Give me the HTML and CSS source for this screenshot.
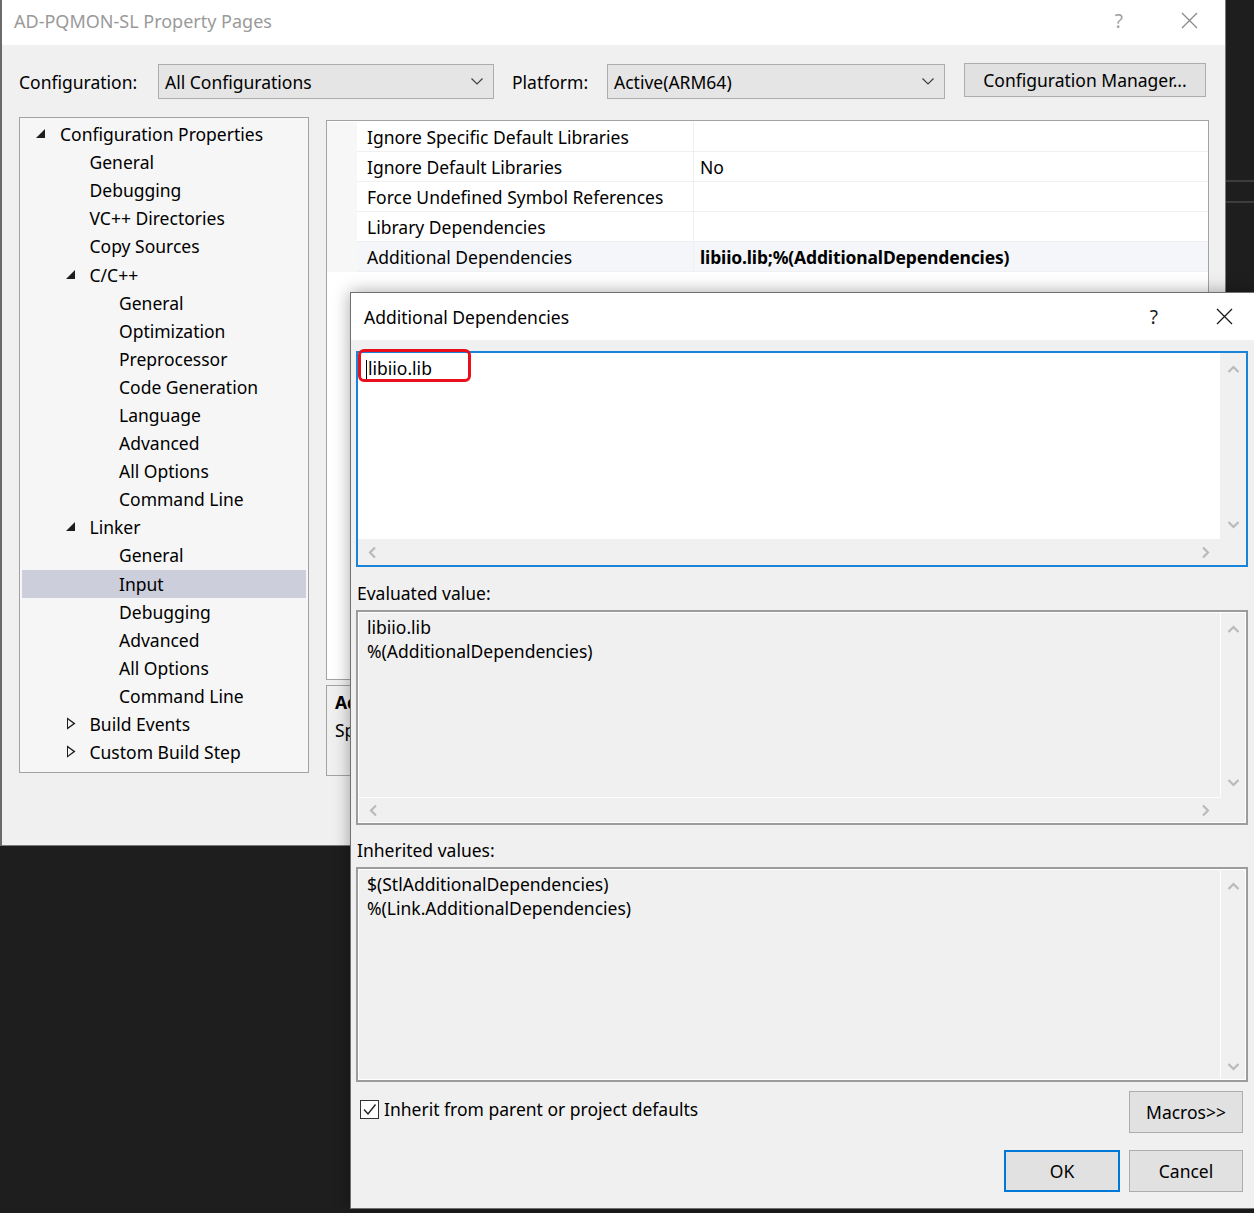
FILE: index.html
```html
<!DOCTYPE html>
<html lang="en">
<head>
<meta charset="utf-8">
<title>AD-PQMON-SL Property Pages</title>
<link rel="stylesheet" href="styles.css">
</head>
<body>
<div class="desk-line dl1"></div>
<div class="desk-line dl2"></div>

<div class="window main">
  <div class="main-title">
    <span class="title">AD-PQMON-SL Property Pages</span>
    <span class="help">?</span>
    <svg class="close" width="17" height="17" viewBox="0 0 17 17"><path d="M1 1L16 16M16 1L1 16" stroke="#8a8a8a" stroke-width="1.3" fill="none"/></svg>
  </div>
  <div class="toolbar">
    <span class="lbl lbl-config">Configuration:</span>
    <div class="select sel-config"><span>All Configurations</span><svg width="12" height="7" viewBox="0 0 12 7"><path d="M0.5 0.5L6 6L11.5 0.5" fill="none" stroke="#404040" stroke-width="1.2"/></svg></div>
    <span class="lbl lbl-plat">Platform:</span>
    <div class="select sel-plat"><span>Active(ARM64)</span><svg width="12" height="7" viewBox="0 0 12 7"><path d="M0.5 0.5L6 6L11.5 0.5" fill="none" stroke="#404040" stroke-width="1.2"/></svg></div>
    <div class="btn cfg-mgr">Configuration Manager...</div>
  </div>
  <div class="content">
    <div class="tree">
      <div class="node l0"><i class="tw open"></i><span>Configuration Properties</span></div>
      <div class="node l1"><i class="tw"></i><span>General</span></div>
      <div class="node l1"><i class="tw"></i><span>Debugging</span></div>
      <div class="node l1"><i class="tw"></i><span>VC++ Directories</span></div>
      <div class="node l1"><i class="tw"></i><span>Copy Sources</span></div>
      <div class="node l1"><i class="tw open"></i><span>C/C++</span></div>
      <div class="node l2"><i class="tw"></i><span>General</span></div>
      <div class="node l2"><i class="tw"></i><span>Optimization</span></div>
      <div class="node l2"><i class="tw"></i><span>Preprocessor</span></div>
      <div class="node l2"><i class="tw"></i><span>Code Generation</span></div>
      <div class="node l2"><i class="tw"></i><span>Language</span></div>
      <div class="node l2"><i class="tw"></i><span>Advanced</span></div>
      <div class="node l2"><i class="tw"></i><span>All Options</span></div>
      <div class="node l2"><i class="tw"></i><span>Command Line</span></div>
      <div class="node l1"><i class="tw open"></i><span>Linker</span></div>
      <div class="node l2"><i class="tw"></i><span>General</span></div>
      <div class="node l2 selected"><i class="tw"></i><span>Input</span></div>
      <div class="node l2"><i class="tw"></i><span>Debugging</span></div>
      <div class="node l2"><i class="tw"></i><span>Advanced</span></div>
      <div class="node l2"><i class="tw"></i><span>All Options</span></div>
      <div class="node l2"><i class="tw"></i><span>Command Line</span></div>
      <div class="node l1"><i class="tw closed"></i><span>Build Events</span></div>
      <div class="node l1"><i class="tw closed"></i><span>Custom Build Step</span></div>
    </div>
    <div class="right">
      <div class="pgrid">
        <div class="prow"><div class="gut"></div><div class="pname">Ignore Specific Default Libraries</div><div class="pval"></div></div>
        <div class="prow"><div class="gut"></div><div class="pname">Ignore Default Libraries</div><div class="pval">No</div></div>
        <div class="prow"><div class="gut"></div><div class="pname">Force Undefined Symbol References</div><div class="pval"></div></div>
        <div class="prow"><div class="gut"></div><div class="pname">Library Dependencies</div><div class="pval"></div></div>
        <div class="prow current"><div class="gut"></div><div class="pname">Additional Dependencies</div><div class="pval strong">libiio.lib;%(AdditionalDependencies)</div></div>
      </div>
      <div class="desc">
        <div class="desc-title">Additional Dependencies</div>
        <div class="desc-text">Specifies additional items to add to the link command line. [i.e. kernel32.lib]</div>
      </div>
    </div>
  </div>
</div>

<div class="window dlg">
  <div class="dlg-title">
    <span class="title">Additional Dependencies</span>
    <span class="help">?</span>
    <svg class="close" width="17" height="17" viewBox="0 0 17 17"><path d="M1 1L16 16M16 1L1 16" stroke="#1a1a1a" stroke-width="1.3" fill="none"/></svg>
  </div>
  <div class="dlg-body">
    <div class="tbox edit">
      <div class="tcontent"><span class="caret"></span>libiio.lib</div>
      <div class="vscroll">
        <svg class="arr" width="13" height="8" viewBox="0 0 13 8"><path d="M1.5 7L6.5 2L11.5 7"/></svg>
        <svg class="arr" width="13" height="8" viewBox="0 0 13 8"><path d="M1.5 1L6.5 6L11.5 1"/></svg>
      </div>
      <div class="hscroll">
        <svg class="arr" width="8" height="13" viewBox="0 0 8 13"><path d="M7 1.5L2 6.5L7 11.5"/></svg>
        <svg class="arr" width="8" height="13" viewBox="0 0 8 13"><path d="M1 1.5L6 6.5L1 11.5"/></svg>
      </div>
      <div class="corner"></div>
      <div class="highlight"></div>
    </div>

    <div class="flabel">Evaluated value:</div>
    <div class="tbox ro">
      <div class="tcontent">libiio.lib<br>%(AdditionalDependencies)</div>
      <div class="vscroll">
        <svg class="arr" width="13" height="8" viewBox="0 0 13 8"><path d="M1.5 7L6.5 2L11.5 7"/></svg>
        <svg class="arr" width="13" height="8" viewBox="0 0 13 8"><path d="M1.5 1L6.5 6L11.5 1"/></svg>
      </div>
      <div class="hscroll">
        <svg class="arr" width="8" height="13" viewBox="0 0 8 13"><path d="M7 1.5L2 6.5L7 11.5"/></svg>
        <svg class="arr" width="8" height="13" viewBox="0 0 8 13"><path d="M1 1.5L6 6.5L1 11.5"/></svg>
      </div>
      <div class="corner"></div>
    </div>

    <div class="flabel flabel2">Inherited values:</div>
    <div class="tbox ro vonly">
      <div class="tcontent">$(StlAdditionalDependencies)<br>%(Link.AdditionalDependencies)</div>
      <div class="vscroll">
        <svg class="arr" width="13" height="8" viewBox="0 0 13 8"><path d="M1.5 7L6.5 2L11.5 7"/></svg>
        <svg class="arr" width="13" height="8" viewBox="0 0 13 8"><path d="M1.5 1L6.5 6L11.5 1"/></svg>
      </div>
    </div>

    <div class="foot1">
      <div class="chk">
        <span class="box"><svg width="17" height="17" viewBox="0 0 17 17"><path d="M3 8.5L7 13L14.5 3.5" fill="none" stroke="#222" stroke-width="1.4"/></svg></span>
        <span>Inherit from parent or project defaults</span>
      </div>
      <div class="btn macros">Macros&gt;&gt;</div>
    </div>
    <div class="foot2">
      <div class="btn ok">OK</div>
      <div class="btn cancel">Cancel</div>
    </div>
  </div>
</div>
</body>
</html>
```

FILE: styles.css
```css
* { box-sizing: border-box; }
html, body { margin: 0; padding: 0; }
body {
  width: 1254px;
  height: 1213px;
  background: #1e1e1e;
  position: relative;
  overflow: hidden;
  font-family: "Noto Sans", "Open Sans", sans-serif;
  font-size: 17.5px;
  color: #000;
}

.desk-line { position: absolute; left: 1226px; width: 28px; height: 2px; background: #3c3c3c; }
.dl1 { top: 180px; }
.dl2 { top: 201px; }

.window { position: absolute; background: #f0f0f0; }

/* ---------- main property pages window ---------- */
.main {
  left: 0; top: 0;
  width: 1226px; height: 846px;
  border: 1px solid #7b7b7b;
  border-left: 2px solid #6a6a6a;
  border-top: 0;
  display: flex;
  flex-direction: column;
}
.main-title {
  flex: none;
  height: 45px;
  background: #fff;
  display: flex;
  align-items: center;
  padding: 0 0 4px 12px;
}
.main-title .title { flex: 1; color: #9a9a9a; font-size: 18px; }
.main-title .help { color: #a0a0a0; font-size: 19px; margin-right: 58px; }
.main-title .close { margin-right: 27px; }

.toolbar {
  flex: none;
  display: flex;
  align-items: center;
  height: 35px;
  margin: 19px 0 0 17px;
}
.lbl { flex: none; }
.lbl-config { width: 139px; }
.lbl-plat { width: 95px; margin-left: 18px; }
.select {
  flex: none;
  height: 35px;
  background: #e5e5e5;
  border: 1px solid #adadad;
  display: flex;
  align-items: center;
  justify-content: space-between;
  padding: 0 10px 0 6px;
}
.sel-config { width: 336px; }
.sel-plat { width: 338px; }
.btn {
  flex: none;
  background: #e1e1e1;
  border: 1px solid #adadad;
  display: flex;
  align-items: center;
  justify-content: center;
}
.cfg-mgr { width: 242px; height: 34px; margin-left: 19px; align-self: flex-start; margin-top: -1px; }

.content {
  flex: none;
  display: flex;
  gap: 17px;
  margin: 18px 0 0 17px;
}
.tree {
  flex: none;
  width: 290px;
  height: 656px;
  border: 1px solid #a3a3a3;
  background: #f6f6f6;
  padding: 2px;
}
.node {
  height: 28.1px;
  display: flex;
  align-items: center;
  white-space: nowrap;
}
.node.l0 { padding-left: 14px; }
.node.l1 { padding-left: 43.5px; }
.node.l2 { padding-left: 73px; }
.node.selected { background: #cccedb; }
.tw { flex: none; width: 24px; height: 12px; position: relative; display: block; }
.tw.open::before {
  content: "";
  position: absolute;
  left: 0; top: 1px;
  border-style: solid;
  border-width: 0 0 9px 9px;
  border-color: transparent transparent #1e1e1e transparent;
}
.tw.closed::before {
  content: "";
  position: absolute;
  left: 1px; top: -1px;
  width: 9px; height: 13px;
  background: #1e1e1e;
  clip-path: polygon(0 0, 100% 50%, 0 100%);
}
.tw.closed::after {
  content: "";
  position: absolute;
  left: 2.2px; top: 1.4px;
  width: 5.5px; height: 8.2px;
  background: #f6f6f6;
  clip-path: polygon(0 0, 100% 50%, 0 100%);
}

.right { flex: none; width: 883px; margin-top: 3px; }
.pgrid {
  height: 560px;
  background: #fff;
  border: 1px solid #a3a3a3;
  padding-top: 1px;
}
.prow {
  display: grid;
  grid-template-columns: 30px 337px 1fr;
  height: 30px;
}
.gut { background: #f7f7f7; }
.pname, .pval {
  display: flex;
  align-items: center;
  border-bottom: 1px solid #f0f0f2;
  white-space: nowrap;
}
.pname { padding-left: 10px; border-right: 1px solid #f0f0f2; }
.pval { padding-left: 6px; }
.prow.current .pname, .prow.current .pval { background: #f4f6fa; }
.pval.strong { font-weight: 700; letter-spacing: -0.15px; }
.desc {
  margin-top: 5px;
  height: 91px;
  border: 1px solid #a3a3a3;
  background: #f0f0f0;
  padding: 2px 8px;
  white-space: nowrap;
  line-height: 28px;
}
.desc-title { font-weight: 700; }

/* ---------- Additional Dependencies dialog ---------- */
.dlg {
  left: 350px; top: 292px;
  width: 905px; height: 917px;
  border: 1px solid #707070;
  box-shadow: 0 0 16px rgba(0, 0, 0, 0.35);
  display: flex;
  flex-direction: column;
}
.dlg-title {
  flex: none;
  height: 47px;
  background: #fff;
  display: flex;
  align-items: center;
  padding-left: 13px;
}
.dlg-title .title { flex: 1; }
.dlg-title .help { font-size: 19px; margin-right: 58px; color: #1a1a1a; }
.dlg-title .close { margin-right: 21px; }

.dlg-body { padding: 11px 6px 0 5px; }
.tbox {
  position: relative;
  height: 216px;
  display: grid;
  grid-template-columns: 1fr 26px;
  grid-template-rows: 1fr 26px;
}
.tbox.ro { height: 215px; border: 2px solid #9c9c9c; box-shadow: inset 0 0 0 1px #fff; background: #f0f0f0; }
.tbox.edit { border: 2px solid #1883d7; background: #fff; }
.tbox.vonly { grid-template-rows: 1fr; }
.tcontent {
  padding: 3px 8px;
  line-height: 24px;
  white-space: nowrap;
  overflow: hidden;
}
.tbox.ro .tcontent { padding-top: 2px; }
.caret { display: inline-block; width: 1px; height: 19px; background: #000; vertical-align: -4px; margin-right: 1px; }
.arr path { fill: none; stroke: #bababa; stroke-width: 2.2; }
.vscroll {
  background: #f0f0f0;
  display: flex;
  flex-direction: column;
  align-items: center;
  justify-content: space-between;
  padding: 12px 0 10px;
}
.hscroll {
  background: #f0f0f0;
  display: flex;
  align-items: center;
  justify-content: space-between;
  padding: 0 10px 0 10px;
}
.corner { background: #f0f0f0; }
.tbox.ro .vscroll { border-left: 1px solid #fff; margin: 1px 1px 0 0; }
.tbox.ro .hscroll { border-top: 1px solid #fff; margin: 0 0 1px 1px; }
.tbox.ro .corner { margin: 0 1px 1px 0; }
.tbox.ro .tcontent { margin: 1px 0 0 1px; }
.tbox.vonly .vscroll { margin-bottom: 1px; padding-bottom: 8px; }
.highlight {
  position: absolute;
  left: 0; top: -4px;
  width: 113px; height: 33px;
  border: 3.5px solid #e8101c;
  border-radius: 6px;
}

.flabel { padding: 14px 0 5px 1px; line-height: 24px; }
.flabel2 { padding-top: 13px; padding-bottom: 5px; }

.foot1 { display: flex; align-items: flex-start; margin-top: 9px; }
.chk { display: flex; align-items: center; gap: 5px; margin: 6px 0 0 4px; }
.chk .box {
  width: 19px; height: 19px;
  border: 1px solid #333;
  background: #fff;
  display: flex;
  align-items: center;
  justify-content: center;
}
.macros { width: 114px; height: 42px; margin-left: auto; margin-right: 5px; }
.foot2 { display: flex; justify-content: flex-end; gap: 9px; margin: 17px 5px 0 0; }
.ok { width: 116px; height: 42px; border: 2px solid #0078d7; }
.cancel { width: 114px; height: 42px; }
```
